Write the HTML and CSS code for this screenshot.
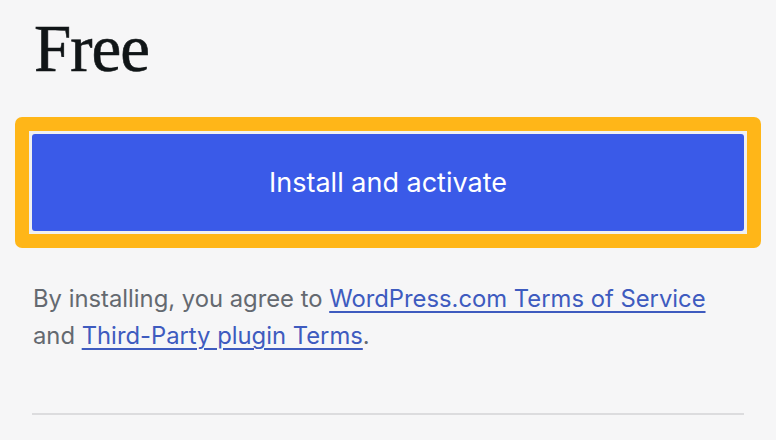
FILE: index.html
```html
<!DOCTYPE html>
<html lang="en">
<head>
<meta charset="utf-8">
<title>Free plugin</title>
<link rel="stylesheet" href="styles.css">
</head>
<body>
<main class="panel">
  <h1 class="price">Free</h1>
  <div class="highlight">
    <div class="gap">
      <button class="install" type="button">Install and activate</button>
    </div>
  </div>
  <p class="terms">By installing, you agree to <a href="#">WordPress.com Terms of Service</a> and <a href="#">Third-Party plugin Terms</a>.</p>
  <hr class="divider">
</main>
</body>
</html>
```
FILE: styles.css
```css
html, body {
  margin: 0;
  padding: 0;
  background: #f6f6f7;
}
body {
  width: 776px;
  height: 440px;
  overflow: hidden;
}
.panel {
  padding: 0 32px 0 32px;
  display: flex;
  flex-direction: column;
}
.price {
  margin: 13px 0 0 2px;
  font-family: "Liberation Serif", "DejaVu Serif", serif;
  font-weight: 400;
  font-size: 67px;
  line-height: 70px;
  letter-spacing: -1px;
  color: #101517;
  -webkit-text-stroke: 0.6px #101517;
}
.highlight {
  margin: 34px -17px 0 -17px;
  background: #ffb618;
  border-radius: 7px;
  padding: 14px;
}
.gap {
  background: #f0f0f1;
  padding: 3px;
}
.install {
  display: block;
  width: 100%;
  height: 97px;
  border: none;
  border-radius: 3px;
  background: #3a5ae8;
  color: #ffffff;
  font-family: Inter, "Noto Sans", sans-serif;
  font-size: 27px;
  font-weight: 400;
  cursor: pointer;
}
.terms {
  margin: 32px 0 0 1px;
  font-family: Inter, "Noto Sans", sans-serif;
  font-size: 23.8px;
  line-height: 37px;
  color: #646970;
}
.terms a {
  color: #3e5bbf;
  text-decoration: underline;
  text-underline-offset: 4px;
  text-decoration-thickness: 1.5px;
}
.divider {
  margin: 59px 0 0 0;
  border: none;
  height: 2px;
  background: #dcdcde;
}
```
